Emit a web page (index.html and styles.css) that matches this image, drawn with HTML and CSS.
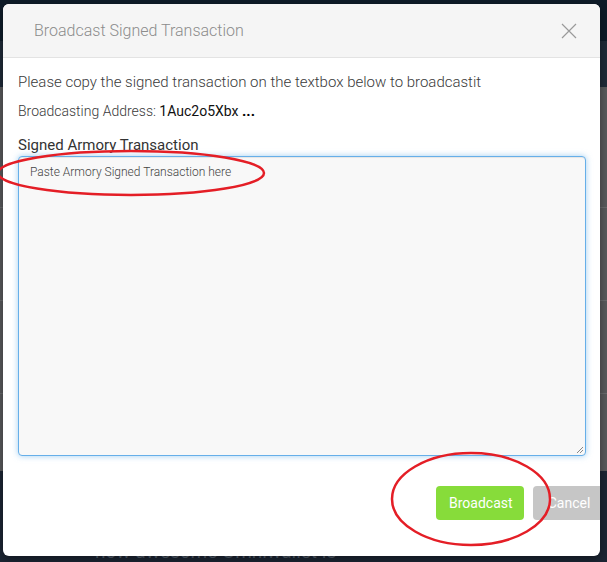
FILE: index.html
```html
<!DOCTYPE html>
<html>
<head>
<meta charset="utf-8">
<title>Broadcast Signed Transaction</title>
<link rel="stylesheet" href="styles.css">
</head>
<body>
<div class="page">
  <div class="nav">
    <span class="nav-link">My Wallet</span>
    <span class="nav-link">Exchange</span>
  </div>
  <div class="sub"></div>
  <div class="content">
    <div class="row-line"></div>
    <div class="row-line"></div>
    <div class="row-line"></div>
  </div>
  <div class="footer"><span class="footer-text">how awesome Omniwallet is</span></div>
</div>

<div class="modal">
  <div class="modal-header">
    <h4 class="modal-title">Broadcast Signed Transaction</h4>
    <svg class="close" width="16" height="16" viewBox="0 0 16 16"><path d="M1 1L15 15M15 1L1 15" stroke="#9a9a9a" stroke-width="1.2" fill="none"/></svg>
  </div>
  <div class="modal-body">
    <p class="intro">Please copy the signed transaction on the textbox below to broadcastit</p>
    <p class="address">Broadcasting Address: <span class="addr">1Auc2o5Xbx</span> <b class="dots">...</b></p>
    <label class="label">Signed Armory Transaction</label>
    <div class="textarea">
      <span class="placeholder">Paste Armory Signed Transaction here</span>
      <svg class="grip" width="9" height="9" viewBox="0 0 9 9"><path d="M8 2L2 8M8 5L5 8" stroke="#888" stroke-width="1" fill="none"/></svg>
    </div>
  </div>
  <div class="modal-footer">
    <button class="btn btn-green">Broadcast</button>
    <button class="btn btn-gray">Cancel</button>
  </div>
</div>

<svg class="marks" width="607" height="562" viewBox="0 0 607 562">
  <ellipse cx="131" cy="173" rx="133" ry="22" fill="none" stroke="#e41e26" stroke-width="2.5"/>
  <ellipse cx="471" cy="499" rx="79" ry="46" fill="none" stroke="#e41e26" stroke-width="2.5"/>
</svg>
</body>
</html>
```
FILE: styles.css
```css
html, body {
  margin: 0;
  padding: 0;
}
body {
  width: 607px;
  height: 562px;
  overflow: hidden;
  position: relative;
  font-family: Roboto, "Liberation Sans", sans-serif;
  background: #1c2533;
}
.page {
  display: flex;
  flex-direction: column;
  height: 562px;
}
.nav {
  height: 43px;
  background: #0e1b28;
  display: flex;
  gap: 42px;
  padding-left: 385px;
  box-sizing: border-box;
}
.nav-link {
  font-size: 17px;
  color: #7d8794;
  line-height: 20px;
  margin-top: 1px;
}
.sub {
  height: 47px;
  background: #1f2a38;
}
.content {
  height: 394px;
  background: #595a5c;
  display: flex;
  flex-direction: column;
  padding-top: 120px;
  gap: 92px;
  box-sizing: border-box;
}
.row-line {
  height: 1px;
  background: #6a6b6d;
}
.footer {
  flex: 1;
  background: #1c2533;
  padding-left: 95px;
  padding-top: 71px;
  box-sizing: border-box;
}
.footer-text {
  font-size: 19px;
  color: #56616f;
  line-height: 20px;
}

.modal {
  position: absolute;
  left: 3px;
  top: 4px;
  width: 597px;
  height: 552px;
  background: #fff;
  border-radius: 6px;
  overflow: hidden;
  box-shadow: 0 3px 9px rgba(0,0,0,0.4);
  display: flex;
  flex-direction: column;
}
.modal-header {
  height: 53px;
  background: #f5f5f5;
  border-bottom: 1px solid #e3e3e3;
  display: flex;
  align-items: center;
  justify-content: space-between;
  padding: 0 23px 0 31px;
  flex-shrink: 0;
}
.modal-title {
  margin: 0;
  font-size: 16px;
  font-weight: 300;
  color: #8c8c8c;
  line-height: 20px;
}
.close {
  display: block;
}
.modal-body {
  padding: 14px 14px 0 15px;
  display: flex;
  flex-direction: column;
}
.intro {
  margin: 0;
  font-size: 15px;
  font-weight: 300;
  line-height: 20px;
  color: #3a3a3a;
}
.address {
  margin: 9px 0 0;
  font-size: 14px;
  font-weight: 300;
  line-height: 20px;
  color: #3a3a3a;
}
.addr {
  color: #111;
  font-weight: 400;
}
.dots {
  color: #000;
  font-weight: 700;
  font-size: 15px;
}
.label {
  margin-top: 14px;
  font-size: 15px;
  line-height: 20px;
  color: #333;
}
.textarea {
  margin-top: 1px;
  height: 300px;
  box-sizing: border-box;
  border: 1px solid #66afe9;
  border-radius: 4px;
  background: #f8f8f8;
  box-shadow: inset 0 1px 1px rgba(0,0,0,0.075), 0 0 6px rgba(102,175,233,0.6);
  padding: 4px 11px;
  position: relative;
}
.placeholder {
  font-size: 12px;
  font-weight: 300;
  line-height: 16px;
  color: #444;
}
.grip {
  position: absolute;
  right: 1px;
  bottom: 1px;
}
.modal-footer {
  display: flex;
  gap: 9px;
  padding: 30px 0 0 433px;
}
.btn {
  height: 34px;
  border: none;
  border-radius: 4px;
  font-family: Roboto, "Liberation Sans", sans-serif;
  font-size: 14px;
  color: #fff;
  padding: 0 13px;
  flex-shrink: 0;
}
.btn-green {
  width: 88px;
  background: #87dc3a;
}
.btn-gray {
  width: 72px;
  background: #c6c6c6;
}
.marks {
  position: absolute;
  left: 0;
  top: 0;
  pointer-events: none;
}
```
